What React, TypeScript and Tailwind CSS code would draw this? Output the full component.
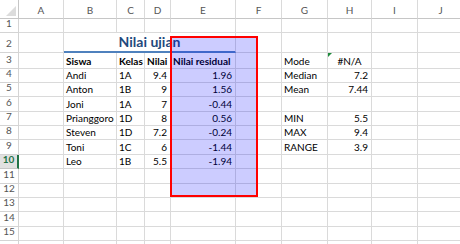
import React from "react";

type Cell = { t: string; a?: "l" | "r" | "c"; b?: boolean };

const cols = [
  { k: "A", w: "w-[45px]" },
  { k: "B", w: "w-[53px]" },
  { k: "C", w: "w-[28px]" },
  { k: "D", w: "w-[26px]" },
  { k: "E", w: "w-[65px]" },
  { k: "F", w: "w-[46px]" },
  { k: "G", w: "w-[46px]" },
  { k: "H", w: "w-[44px]" },
  { k: "I", w: "w-[46px]" },
  { k: "J", w: "w-[46px]" },
];

// row number -> column letter -> cell
const data: Record<number, Record<string, Cell>> = {
  3: {
    B: { t: "Siswa", b: true },
    C: { t: "Kelas", b: true },
    D: { t: "Nilai", b: true },
    E: { t: "Nilai residual", b: true },
    G: { t: "Mode" },
    H: { t: "#N/A", a: "c" },
  },
  4: {
    B: { t: "Andi" },
    C: { t: "1A" },
    D: { t: "9.4", a: "r" },
    E: { t: "1.96", a: "r" },
    G: { t: "Median" },
    H: { t: "7.2", a: "r" },
  },
  5: {
    B: { t: "Anton" },
    C: { t: "1B" },
    D: { t: "9", a: "r" },
    E: { t: "1.56", a: "r" },
    G: { t: "Mean" },
    H: { t: "7.44", a: "r" },
  },
  6: {
    B: { t: "Joni" },
    C: { t: "1A" },
    D: { t: "7", a: "r" },
    E: { t: "-0.44", a: "r" },
  },
  7: {
    B: { t: "Prianggoro" },
    C: { t: "1D" },
    D: { t: "8", a: "r" },
    E: { t: "0.56", a: "r" },
    G: { t: "MIN" },
    H: { t: "5.5", a: "r" },
  },
  8: {
    B: { t: "Steven" },
    C: { t: "1D" },
    D: { t: "7.2", a: "r" },
    E: { t: "-0.24", a: "r" },
    G: { t: "MAX" },
    H: { t: "9.4", a: "r" },
  },
  9: {
    B: { t: "Toni" },
    C: { t: "1C" },
    D: { t: "6", a: "r" },
    E: { t: "-1.44", a: "r" },
    G: { t: "RANGE" },
    H: { t: "3.9", a: "r" },
  },
  10: {
    B: { t: "Leo" },
    C: { t: "1B" },
    D: { t: "5.5", a: "r" },
    E: { t: "-1.94", a: "r" },
  },
};

const rowH: Record<number, string> = {
  1: "h-[14px]",
  2: "h-[20px]",
  3: "h-[15.5px]",
};

const align = {
  l: "justify-start pl-[2px]",
  r: "justify-end pr-[3px]",
  c: "justify-center",
};

const Row = ({ n }: { n: number }) => {
  const active = n === 10;
  const cells = data[n] || {};
  return (
    <div className={`flex ${rowH[n] || "h-[14.4px]"}`}>
      <div
        className={
          active
            ? "flex w-[19px] shrink-0 items-end justify-center border-b border-r-2 border-b-[#c6c6c6] border-r-[#217346] bg-[#e1e1e1] pb-[1px] text-[10px] font-bold text-[#217346]"
            : "flex w-[19px] shrink-0 items-end justify-center border-b border-r border-[#d4d4d4] pb-[1px] text-[10px] text-[#555]"
        }
      >
        {/* row 16 only peeks out at the bottom edge */}
        {n < 16 ? n : ""}
      </div>
      {n === 2 ? (
        <>
          <div className="w-[45px] shrink-0 border-b border-r border-[#dadada]" />
          <div className="flex w-[172px] shrink-0 items-end justify-center border-b-2 border-r border-b-[#4f81bd] border-r-[#dadada] text-[14px] leading-[18px] font-bold text-[#1f497d]">
            Nilai ujian
          </div>
          {cols.slice(5).map((c) => (
            <div key={c.k} className={`${c.w} shrink-0 border-b border-r border-[#dadada]`} />
          ))}
        </>
      ) : (
        cols.map((c) => {
          const cell = cells[c.k];
          return (
            <div
              key={c.k}
              className={`relative flex ${c.w} shrink-0 items-end whitespace-nowrap border-b border-r border-[#dadada] pb-[1px] text-[10px] leading-[12px] text-black ${
                align[cell?.a || "l"]
              } ${cell?.b ? "font-bold" : ""}`}
            >
              {n === 3 && c.k === "H" && (
                <span className="absolute left-0 top-0 h-0 w-0 border-r-[4px] border-t-[4px] border-r-transparent border-t-[#1e8a3c]" />
              )}
              {cell?.t}
            </div>
          );
        })
      )}
    </div>
  );
};

export default function App() {
  const rows = Array.from({ length: 16 }, (_, i) => i + 1);
  return (
    <div className="relative h-[244px] w-[460px] overflow-hidden bg-white font-['Lato',sans-serif]">
      <div className="flex h-[19px]">
        <div className="relative w-[19px] shrink-0 border-b border-r border-[#c6c6c6]">
          <svg className="absolute bottom-[2px] right-[2px]" width="10" height="10" viewBox="0 0 10 10">
            <polygon points="10,0 10,10 0,10" fill="#dcdcdc" />
          </svg>
        </div>
        {cols.map((c) => (
          <div
            key={c.k}
            className={`flex ${c.w} shrink-0 items-center justify-center border-b border-r border-b-[#c6c6c6] border-r-[#dadada] pt-[2px] text-[10px] text-[#555]`}
          >
            {c.k}
          </div>
        ))}
      </div>
      {rows.map((n) => (
        <Row key={n} n={n} />
      ))}
      <div className="absolute left-[170px] top-[36px] h-[161px] w-[88px] border-2 border-[#ff0000] bg-[#0000ff]/20" />
    </div>
  );
}
